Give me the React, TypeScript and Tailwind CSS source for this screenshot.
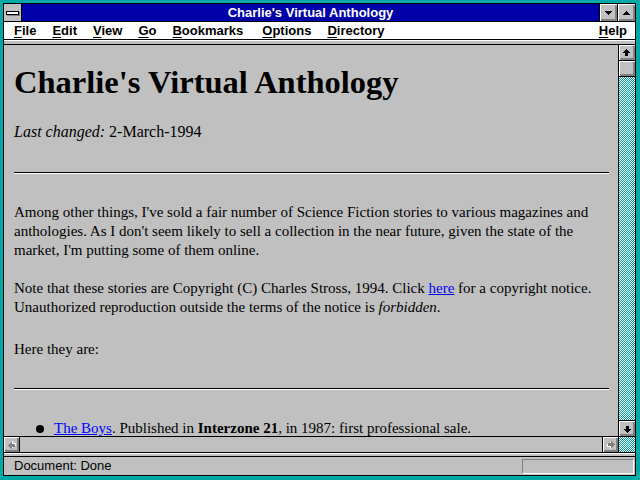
import React from 'react';

const bevel = 'bg-[#c0c0c0] shadow-[inset_1px_1px_0_#ffffff,inset_-1px_-1px_0_#808080,inset_-2px_-2px_0_#808080]';
const dither = 'bg-[image:repeating-conic-gradient(#00a8a8_0%_25%,#ffffff_0%_50%)] bg-[length:2px_2px]';

function Arrow({ dir, disabled }: { dir: 'up' | 'down' | 'left' | 'right'; disabled?: boolean }) {
  const rot = { up: 0, right: 90, down: 180, left: 270 }[dir];
  const d = 'M3 0H4V1H5V2H6V3H7V4H5V7H2V4H0V3H1V2H2V1H3Z';
  return (
    <svg width="8" height="8" viewBox="0 0 8 8" shapeRendering="crispEdges" style={{ transform: `rotate(${rot}deg)` }}>
      {disabled ? (
        <>
          <path d={d} fill="#ffffff" transform="translate(1 1)" />
          <path d={d} fill="#808080" />
        </>
      ) : (
        <path d={d} fill="#000000" />
      )}
    </svg>
  );
}

function Tri({ up }: { up?: boolean }) {
  return (
    <svg width="7" height="4" viewBox="0 0 7 4" shapeRendering="crispEdges" className={up ? 'rotate-180' : ''}>
      <path d="M0 0H7V1H6V2H5V3H4V4H3V3H2V2H1V1H0Z" fill="#000" />
    </svg>
  );
}

function MenuItem({ label }: { label: string }) {
  return (
    <span className="px-2">
      <span className="underline underline-offset-2">{label[0]}</span>
      {label.slice(1)}
    </span>
  );
}

export default function App() {
  return (
    <div className="w-[640px] h-[480px] bg-[#00a8a8] pt-[3px] pl-[3px] pr-[4px] pb-[4px]">
      <div className="h-full border border-black flex flex-col bg-[#c0c0c0] overflow-hidden">
        {/* title bar */}
        <div className="h-[18px] flex border-b border-black shrink-0">
          <div className="w-[18px] bg-[#c0c0c0] flex items-center justify-center border-r border-black">
            <div className="w-[13px] h-[4px] bg-white border border-black shadow-[1px_1px_0_#808080]" />
          </div>
          <div className="flex-1 bg-[#0000a8] text-white font-bold text-[13px] leading-[18px] text-center font-['Liberation_Sans',Arial,sans-serif]">
            Charlie's Virtual Anthology
          </div>
          <div className={`w-[18px] border-l border-black flex items-center justify-center ${bevel}`}>
            <Tri />
          </div>
          <div className={`w-[18px] border-l border-black flex items-center justify-center ${bevel}`}>
            <Tri up />
          </div>
        </div>

        {/* menu bar */}
        <div className="h-[18px] bg-white flex items-center pl-[2px] pr-0 text-[13px] font-bold font-['Liberation_Sans',Arial,sans-serif] border-b border-black shrink-0">
          <MenuItem label="File" />
          <MenuItem label="Edit" />
          <MenuItem label="View" />
          <MenuItem label="Go" />
          <MenuItem label="Bookmarks" />
          <span className="w-[3px]" />
          <MenuItem label="Options" />
          <MenuItem label="Directory" />
          <div className="flex-1" />
          <MenuItem label="Help" />
        </div>
        <div className="h-[4px] border-t border-white shrink-0" />
        <div className="h-[1px] bg-black shrink-0" />

        {/* page area */}
        <div className="flex-1 flex min-h-0">
          <div className="flex-1 overflow-hidden pl-[10px] pr-[9px] text-black font-['Liberation_Serif','Times_New_Roman',serif] text-[15px] leading-[19px]">
            <h1 className="mt-[20px] text-[32.5px] leading-[34px] font-bold whitespace-nowrap">Charlie's Virtual Anthology</h1>
            <p className="mt-[23px] text-[16px]">
              <i>Last changed:</i> 2-March-1994
            </p>
            <div className="mt-[31px] border-t border-black border-b border-b-white" />
            <p className="mt-[29px] whitespace-nowrap">
              Among other things, I've sold a fair number of Science Fiction stories to various magazines and
              <br />
              anthologies. As I don't seem likely to sell a collection in the near future, given the state of the
              <br />
              market, I'm putting some of them online.
            </p>
            <p className="mt-[19px] whitespace-nowrap">
              Note that these stories are Copyright (C) Charles Stross, 1994. Click{' '}
              <a className="text-[#0000ff] underline">here</a> for a copyright notice.
              <br />
              Unauthorized reproduction outside the terms of the notice is <i>forbidden</i>.
            </p>
            <p className="mt-[23px]">Here they are:</p>
            <div className="mt-[29px] border-t border-black border-b border-b-white" />
            <ul className="mt-[29px]">
              <li className="flex items-center whitespace-nowrap">
                <span className="ml-[22px] mr-[10px] w-[8px] h-[8px] rounded-full bg-black" />
                <span>
                  <a className="text-[#0000ff] underline">The Boys</a>. Published in <b>Interzone 21</b>, in 1987: first
                  professional sale.
                </span>
              </li>
            </ul>
          </div>

          {/* vertical scrollbar */}
          <div className="w-[17px] border-l border-black flex flex-col">
            <div className={`h-[16px] border-b border-black flex items-center justify-center ${bevel}`}>
              <Arrow dir="up" />
            </div>
            <div className={`h-[16px] border-b border-black ${bevel}`} />
            <div className={`flex-1 ${dither}`} />
            <div className={`h-[16px] border-t border-black flex items-center justify-center ${bevel}`}>
              <Arrow dir="down" />
            </div>
          </div>
        </div>

        {/* horizontal scrollbar */}
        <div className="h-[16px] border-t border-black flex shrink-0">
          <div className={`w-[16px] border-r border-black flex items-center justify-center ${bevel}`}>
            <Arrow dir="left" disabled />
          </div>
          <div className="flex-1 bg-[#c0c0c0]" />
          <div className={`w-[16px] border-l border-black flex items-center justify-center ${bevel}`}>
            <Arrow dir="right" disabled />
          </div>
          <div className={`w-[17px] border-l border-black ${dither}`} />
        </div>
        <div className="h-[1px] bg-black shrink-0" />
        <div className="h-[4px] border-t border-white border-b border-b-black shrink-0" />

        {/* status bar */}
        <div className="h-[18px] shrink-0 flex items-center pl-[10px] pr-[1px] text-[13px] font-['Liberation_Sans',Arial,sans-serif]">
          <span className="flex-1">Document: Done</span>
          <div className="w-[112px] h-[15px] border-t border-l border-[#808080] border-b border-r border-b-white border-r-white" />
        </div>
      </div>
    </div>
  );
}
